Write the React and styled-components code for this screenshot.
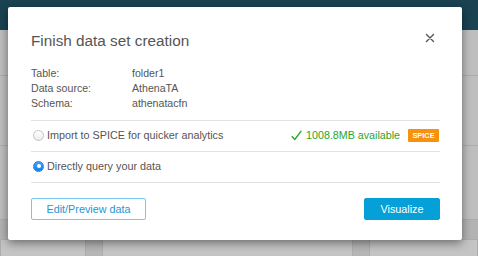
import React from "react";
import styled, { createGlobalStyle } from "styled-components";

const Global = createGlobalStyle`
  html, body { margin: 0; padding: 0; }
  body {
    width: 478px;
    height: 256px;
    overflow: hidden;
    font-family: "Liberation Sans", Arial, Helvetica, sans-serif;
    background: #bdbdbd;
  }
  * { box-sizing: border-box; }
`;

const Page = styled.div`
  position: relative;
  width: 478px;
  height: 256px;
  display: flex;
  flex-direction: column;
  background: #bdbdbd;
`;

const TopBar = styled.div`
  height: 30px;
  flex: none;
  background: #1a4251;
`;

const BgRow = styled.div`
  height: ${(p) => p.$h}px;
  flex: none;
  border-bottom: 1px solid #acacac;
  background: ${(p) => p.$bg || "#bebebe"};
`;

const CardRow = styled.div`
  flex: 1;
  display: flex;
  gap: 16px;
  background: #b6b6b6;
`;

const BgCard = styled.div`
  width: ${(p) => p.$w}px;
  flex: ${(p) => (p.$grow ? 1 : "none")};
  background: #c4c4c4;
  border-left: 1px solid #adadad;
  border-right: 1px solid #adadad;
`;

const Overlay = styled.div`
  position: absolute;
  left: 8px;
  top: 7px;
  width: 454px;
`;

const Modal = styled.div`
  background: #fff;
  border-radius: 2px;
  box-shadow: 0 3px 10px rgba(0, 0, 0, 0.45);
  padding: 24px 22px 20px 23px;
  color: #555;
`;

const Header = styled.div`
  display: flex;
  justify-content: space-between;
  align-items: flex-start;
  height: 20px;
`;

const Title = styled.h2`
  margin: 0;
  font-size: 15.3px;
  line-height: 20px;
  font-weight: normal;
  color: #555;
`;

const CloseButton = styled.button`
  border: 0;
  background: none;
  padding: 0;
  margin: 2px 5px 0 0;
  width: 10px;
  height: 10px;
  display: flex;
  cursor: pointer;
`;

const InfoList = styled.div`
  margin-top: 15px;
  display: flex;
  flex-direction: column;
`;

const InfoRow = styled.div`
  display: grid;
  grid-template-columns: 101px 1fr;
  font-size: 10.6px;
  line-height: 15px;
  height: 15px;
  color: #555;
`;

const Options = styled.div`
  margin-top: 9px;
  border-top: 1px solid #e2e2e2;
`;

const OptionRow = styled.label`
  display: flex;
  align-items: center;
  height: 31px;
  padding-left: 2px;
  border-bottom: 1px solid #e2e2e2;
  font-size: 10.8px;
  color: #555;
`;

const Radio = styled.span`
  width: 11px;
  height: 11px;
  border-radius: 50%;
  flex: none;
  margin-right: 3px;
  margin-top: -2px;
  display: flex;
  align-items: center;
  justify-content: center;
  border: 1px solid ${(p) => (p.$checked ? "#1a86f0" : "#c4c4c4")};
  background: ${(p) =>
    p.$checked
      ? "linear-gradient(#3fa0ff, #1580ee)"
      : "linear-gradient(#ffffff, #ededed)"};
  &::after {
    content: "";
    display: ${(p) => (p.$checked ? "block" : "none")};
    width: 4px;
    height: 4px;
    border-radius: 50%;
    background: #fff;
  }
`;

const OptionLabel = styled.span`
  flex: 1;
  margin-top: -2px;
`;

const Available = styled.span`
  display: flex;
  align-items: center;
  gap: 4px;
  color: #2aa52a;
  font-size: 10.7px;
  margin-top: -2px;
  margin-right: 8px;
`;

const Badge = styled.span`
  width: 31px;
  height: 13px;
  margin-top: -2px;
  margin-right: 1px;
  background: #f7920f;
  color: #fff;
  font-size: 7.4px;
  font-weight: bold;
  display: flex;
  align-items: center;
  justify-content: center;
  border-radius: 1px;
`;

const Footer = styled.div`
  margin-top: 15px;
  display: flex;
  justify-content: space-between;
`;

const Button = styled.button`
  height: 22px;
  width: ${(p) => p.$w}px;
  font-family: "Liberation Sans", Arial, sans-serif;
  font-size: 10.8px;
  border-radius: 2px;
  padding: 0;
  cursor: pointer;
  border: 1px solid ${(p) => (p.$primary ? "#05a0d8" : "#76c9ec")};
  background: ${(p) => (p.$primary ? "#05a0d8" : "#fff")};
  color: ${(p) => (p.$primary ? "#fff" : "#1d97d2")};
`;

const info = [
  ["Table:", "folder1"],
  ["Data source:", "AthenaTA"],
  ["Schema:", "athenatacfn"],
];

export default function App() {
  return (
    <>
      <Global />
      <Page>
        <TopBar />
        <BgRow $h={46} />
        <BgRow $h={70} />
        <BgRow $h={74} />
        <BgRow $h={20} $bg="#b3b3b3" />
        <CardRow>
          <BgCard $w={86} />
          <BgCard $grow />
          <BgCard $w={109} />
        </CardRow>

        <Overlay>
          <Modal>
            <Header>
              <Title>Finish data set creation</Title>
              <CloseButton aria-label="Close">
                <svg width="10" height="10" viewBox="0 0 10 10">
                  <path
                    d="M1.5 1.5 L8.5 8.5 M8.5 1.5 L1.5 8.5"
                    stroke="#555"
                    strokeWidth="1.4"
                    strokeLinecap="round"
                  />
                </svg>
              </CloseButton>
            </Header>

            <InfoList>
              {info.map(([k, v]) => (
                <InfoRow key={k}>
                  <span>{k}</span>
                  <span>{v}</span>
                </InfoRow>
              ))}
            </InfoList>

            <Options>
              <OptionRow>
                <Radio />
                <OptionLabel>Import to SPICE for quicker analytics</OptionLabel>
                <Available>
                  <svg width="11" height="11" viewBox="0 0 11 11">
                    <path
                      d="M0.8 6.2 L3.8 9.5 L10.3 0.8"
                      fill="none"
                      stroke="#2aa52a"
                      strokeWidth="1.4"
                    />
                  </svg>
                  1008.8MB available
                </Available>
                <Badge>SPICE</Badge>
              </OptionRow>
              <OptionRow>
                <Radio $checked />
                <OptionLabel>Directly query your data</OptionLabel>
              </OptionRow>
            </Options>

            <Footer>
              <Button $w={115}>Edit/Preview data</Button>
              <Button $w={76} $primary>
                Visualize
              </Button>
            </Footer>
          </Modal>
        </Overlay>
      </Page>
    </>
  );
}
